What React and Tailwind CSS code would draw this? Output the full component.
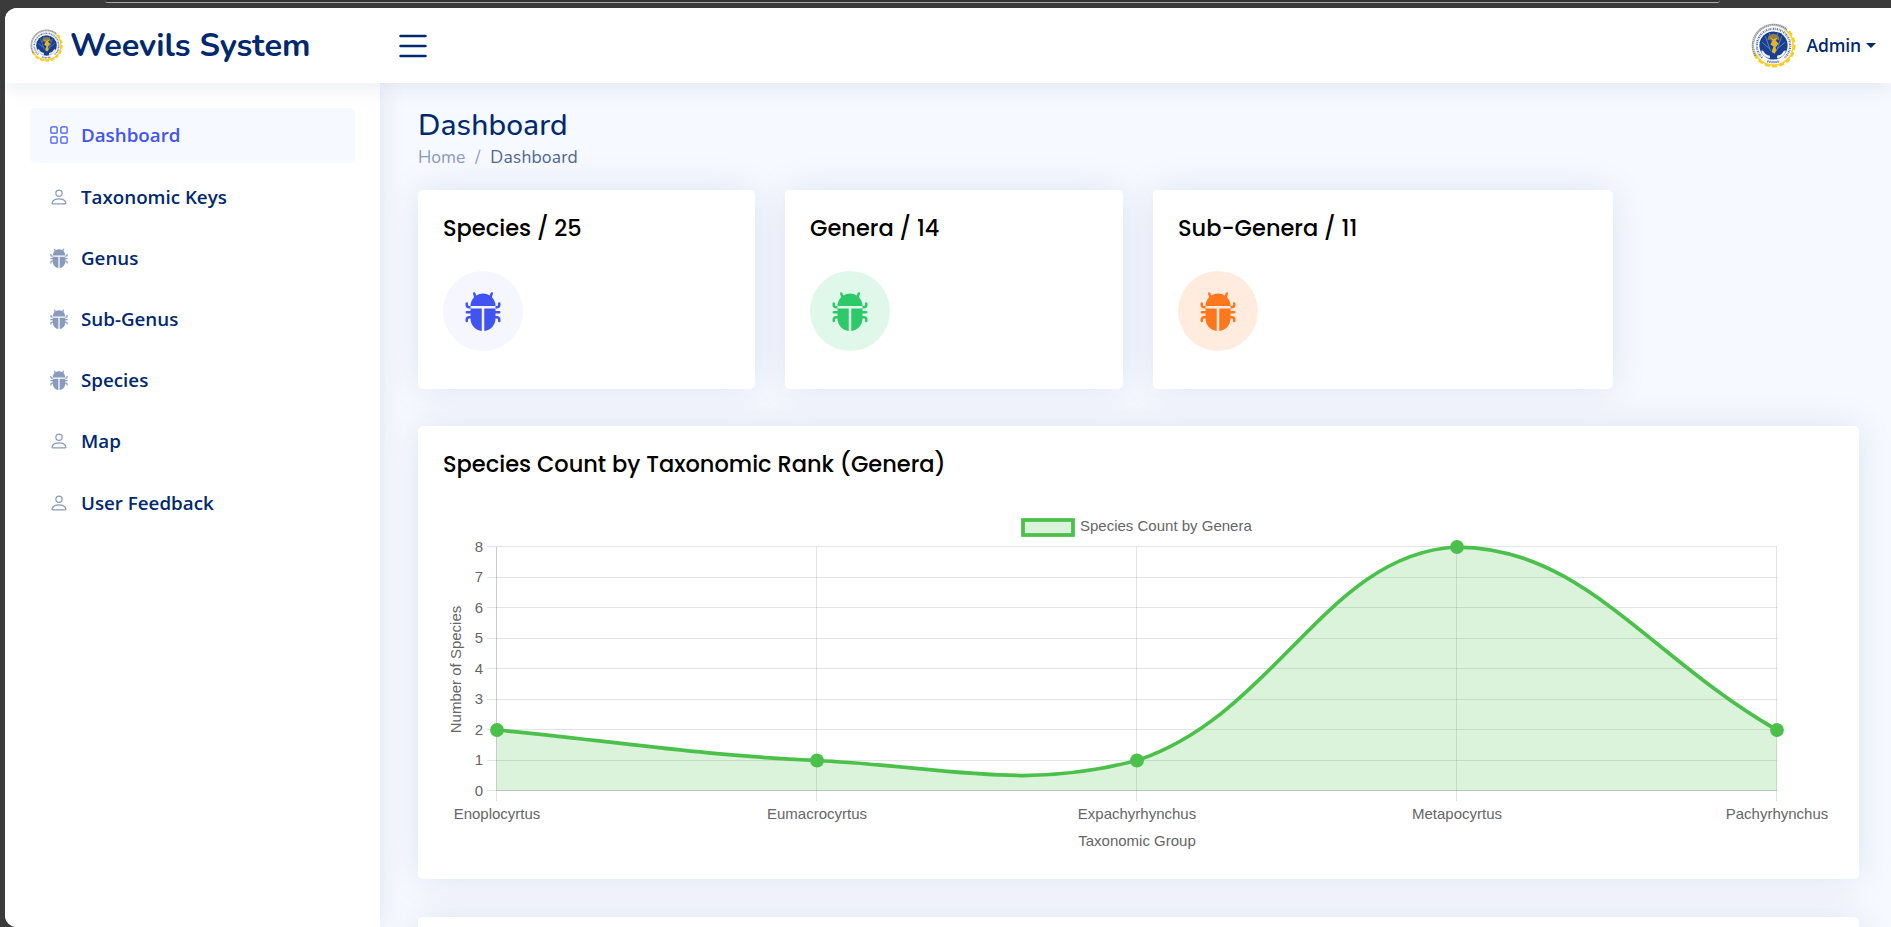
import React from "react";
import { BsGrid, BsPerson, BsBugFill, BsList } from "react-icons/bs";

const NAV = [
  { label: "Dashboard", icon: BsGrid, active: true },
  { label: "Taxonomic Keys", icon: BsPerson },
  { label: "Genus", icon: BsBugFill },
  { label: "Sub-Genus", icon: BsBugFill },
  { label: "Species", icon: BsBugFill },
  { label: "Map", icon: BsPerson },
  { label: "User Feedback", icon: BsPerson },
];

const STATS = [
  { title: "Species / 25", width: "w-[337px]", tone: "bg-[#f6f6fe] text-[#4154f1]" },
  { title: "Genera / 14", width: "w-[338px]", tone: "bg-[#e0f8e9] text-[#2eca6a]" },
  { title: "Sub-Genera / 11", width: "w-[460px]", tone: "bg-[#ffecdf] text-[#ff771d]" },
];

function Seal({ size }) {
  const teeth = Array.from({ length: 10 }, (_, i) => -36 + i * 20.5);
  return (
    <svg width={size} height={size} viewBox="0 0 44 44" className="shrink-0">
      {teeth.map((a) => (
        <rect key={a} x="38.500" y="19.500" width="5" height="5" rx=".5" fill="#fcca16" transform={`rotate(${a} 22 22)`} />
      ))}
      <circle cx="22" cy="22" r="18.900" fill="#fff" />
      <path d="M34 7A19.200 19.200 0 1 1 5 31" fill="none" stroke="#fcd030" strokeWidth="1.600" />
      <path d="M4.500 32A20.200 20.200 0 0 1 35 6.500" fill="none" stroke="#7d8ca8" strokeWidth="2.200" strokeDasharray="1.500 .4" />
      <path d="M4.900 31A18.800 18.800 0 0 1 34 7.600" fill="none" stroke="#e5cf83" strokeWidth=".7" />
      <path d="M11 34A16.300 16.300 0 1 1 33 34" fill="none" stroke="#5d71a5" strokeWidth="2.200" strokeDasharray="1.200 .9 .6 .8" />
      <path d="M16 37.300Q22 39.400 28 37.300" fill="none" stroke="#5d71a5" strokeWidth="2.200" strokeDasharray="1.200 .8" />
      <circle cx="22" cy="22" r="13.800" fill="#173f94" />
      <path d="M14 13l5 14M30 13l-5 14M11 19l7 6M33 19l-7 6M18 10l2 8M26 10l-2 8" stroke="#7f8fa9" strokeWidth=".8" />
      <path d="M17 13q5-5 10 0l1 4-3-1h-6l-3 1Z" fill="#927f43" />
      <path d="M10 27c1 0 2 0 2.500 1 1 2 3 3.500 6 4v2.500c-5-.5-8-3.500-8.500-7.500ZM34 27c-1 0-2 0-2.500 1-1 2-3 3.500-6 4v2.500c5-.5 8-3.500 8.500-7.500Z" fill="#eef1f7" />
      <path d="M18 14l3 3-2 4 3 2-2 5 3 2 2-3-1-3 3-4-3-3 2-3-4 2Z" fill="#e4b526" />
    </svg>
  );
}

const POINTS_X = [79, 399, 719, 1039, 1359];
const VALUES = [2, 1, 1, 8, 2];
const TICKS = [0, 1, 2, 3, 4, 5, 6, 7, 8];
const LABELS = ["Enoplocyrtus", "Eumacrocyrtus", "Expachyrhynchus", "Metapocyrtus", "Pachyrhynchus"];
const TOP = 121;
const BOTTOM = 365;
const toY = (v) => BOTTOM - v * 30.5;

function splinePath() {
  const pts = POINTS_X.map((x, i) => ({ x, y: toY(VALUES[i]) }));
  const clamp = (y) => Math.max(TOP, Math.min(BOTTOM, y));
  const controls = pts.map((p, i) => {
    const a = pts[Math.max(0, i - 1)];
    const b = pts[Math.min(pts.length - 1, i + 1)];
    const d0 = Math.hypot(p.x - a.x, p.y - a.y);
    const d1 = Math.hypot(b.x - p.x, b.y - p.y);
    const f0 = (0.4 * d0) / (d0 + d1);
    const f1 = (0.4 * d1) / (d0 + d1);
    return {
      in: [p.x - f0 * (b.x - a.x), clamp(p.y - f0 * (b.y - a.y))],
      out: [p.x + f1 * (b.x - a.x), clamp(p.y + f1 * (b.y - a.y))],
    };
  });
  return pts.reduce(
    (d, p, i) => (i === 0 ? `M${p.x} ${p.y}` : `${d}C${controls[i - 1].out} ${controls[i].in} ${p.x} ${p.y}`),
    ""
  );
}

function Chart() {
  const line = splinePath();
  return (
    <svg width="1441" height="453" viewBox="0 0 1441 453" className="block font-['Liberation_Sans',Arial,sans-serif] text-[15px]" fill="#666">
      {TICKS.map((v) => (
        <g key={v}>
          <path d={`M69 ${Math.floor(toY(v) - 0.5) + 0.5}H1359`} stroke="#000" strokeOpacity=".11" />
          <text x="65" y={toY(v) + 4.500} textAnchor="end">{v}</text>
        </g>
      ))}
      {POINTS_X.map((x, i) => (
        <g key={x}>
          <path d={`M${x - 0.5} ${TOP}V375`} stroke="#000" strokeOpacity=".11" />
          <text x={x} y="392.500" textAnchor="middle">{LABELS[i]}</text>
        </g>
      ))}
      <path d={`M78.500 ${TOP}V${BOTTOM}M79 364.500H1359`} stroke="#000" strokeOpacity=".1" />
      <path d={`${line}V${BOTTOM}H79Z`} fill="#4bc04b" fillOpacity=".2" />
      <path d={line} fill="none" stroke="#4bc04b" strokeWidth="3.750" />
      {POINTS_X.map((x, i) => (
        <circle key={x} cx={x} cy={toY(VALUES[i])} r="6.900" fill="#4bc04b" />
      ))}
      <rect x="605" y="94" width="50" height="15" fill="#dbf2db" stroke="#4bc04b" strokeWidth="3.750" />
      <text x="662" y="105">Species Count by Genera</text>
      <text x="719" y="419.500" textAnchor="middle">Taxonomic Group</text>
      <text transform="translate(43 243.500) rotate(-90)" textAnchor="middle">Number of Species</text>
    </svg>
  );
}

const CARD = "rounded-[5px] bg-white shadow-[0_0_37px_rgba(1,41,112,0.1)]";
const CARD_TITLE = "font-[Poppins,Inter,sans-serif] text-[22.500px] font-medium leading-[27px] text-black";

export default function App() {
  return (
    <div className="h-[927px] w-full overflow-hidden bg-[#3b3b3b]">
      <div className="flex h-2 justify-start pl-[105px]">
        <div className="h-[3px] w-[1615px] rounded-b-[12px] border-b border-[#aaa] bg-[#333]" />
      </div>
      <div className="ml-[5px] flex h-[919px] flex-col overflow-hidden rounded-l-[12px] bg-[#f6f9ff]">
        <header className="relative z-20 flex h-[75px] shrink-0 items-center bg-white pl-[25px] pr-[15px] shadow-[0_2px_25px_rgba(1,41,112,0.1)]">
          <div className="flex w-[363px] items-center">
            <Seal size={33} />
            <span className="-mt-px ml-[7px] whitespace-nowrap font-[Nunito,Lato,sans-serif] text-[32.500px] font-bold leading-[40px] text-[#012970]">Weevils System</span>
          </div>
          <BsList className="size-10 text-[#012970]" />
          <div className="ml-auto flex items-center">
            <Seal size={45} />
            <span className="ml-[11px] font-['Open_Sans',sans-serif] text-[17.500px] font-semibold tracking-[-0.15px] text-[#012970]">Admin</span>
            <span className="ml-[5px] border-x-[5px] border-t-[5px] border-x-transparent border-t-[#012970]" />
          </div>
        </header>
        <div className="flex min-h-0 flex-1">
          <aside className="relative z-10 w-[375px] shrink-0 bg-white p-[25px] shadow-[0_0_25px_rgba(1,41,112,0.1)]">
            <nav className="flex flex-col gap-[6.200px]">
              {NAV.map(({ label, icon: Icon, active }) => (
                <a key={label} className={active ? "flex h-[55px] items-center rounded-[5px] bg-[#f6f9ff] pb-px pl-[19px] text-[#4154f1]" : "flex h-[55px] items-center rounded-[5px] pl-[19px] text-[#012970]"}>
                  <Icon className={active ? "mr-[13px] size-5 text-[#4154f1]" : "mr-[13px] size-5 text-[#899bbd]"} />
                  <span className="-ml-px font-['Open_Sans',sans-serif] text-[18.750px] font-semibold leading-7">{label}</span>
                </a>
              ))}
            </nav>
          </aside>
          <main className="flex min-w-0 flex-1 flex-col pl-[38px] pr-8 pt-[24px]">
            <h1 className="h-[36px] pt-px font-[Nunito,Lato,sans-serif] text-[30px] font-medium leading-[36px] tracking-[0.1px] text-[#012970]">Dashboard</h1>
            <div className="mt-[2px] flex h-[24px] gap-[10px] font-[Nunito,Lato,sans-serif] text-[17.500px] leading-[24px] text-[#899bbd]">
              <span>Home</span>
              <span>/</span>
              <span className="tracking-[0.15px] text-[#51678f]">Dashboard</span>
            </div>
            <div className="mt-[21px] flex h-[199px] shrink-0 gap-[30px]">
              {STATS.map(({ title, width, tone }) => (
                <section key={title} className={`${CARD} ${width} px-[25px] pt-[25px]`}>
                  <h2 className={CARD_TITLE}>{title}</h2>
                  <div className={`mt-[29px] flex size-20 items-center justify-center rounded-full pr-px ${tone}`}>
                    <BsBugFill className="size-10" />
                  </div>
                </section>
              ))}
            </div>
            <section className={`${CARD} relative mt-[37px] h-[453px] w-[1441px] shrink-0`}>
              <h2 className={`${CARD_TITLE} absolute left-[25px] top-[25px]`}>Species Count by Taxonomic Rank (Genera)</h2>
              <Chart />
            </section>
            <section className={`${CARD} mt-[38px] h-20 w-[1441px] shrink-0`} />
          </main>
        </div>
      </div>
    </div>
  );
}
